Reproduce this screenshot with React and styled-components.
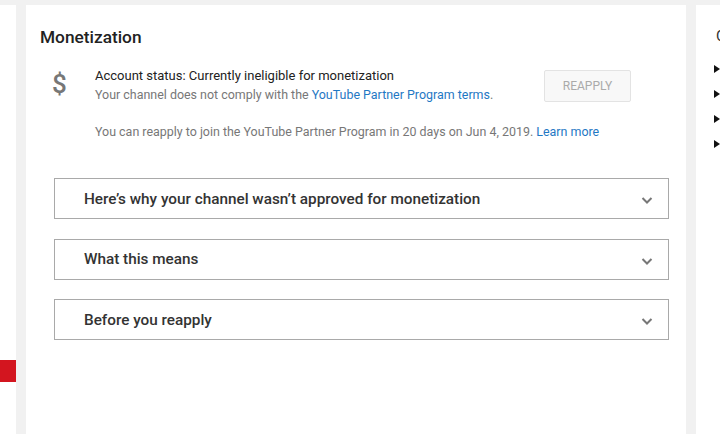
import React from 'react'
import styled, { createGlobalStyle } from 'styled-components'

const GlobalStyle = createGlobalStyle`
  html, body {
    margin: 0;
    padding: 0;
    background: #f1f1f1;
    font-family: Roboto, "Liberation Sans", Arial, sans-serif;
    overflow: hidden;
  }
`

const Page = styled.div`
  display: flex;
  gap: 10px;
  height: 434px;
  padding-top: 5px;
  box-sizing: border-box;
  width: 720px;
  overflow: hidden;
`

const SidePanel = styled.div`
  width: 16px;
  flex: none;
  background: #fff;
  display: flex;
  flex-direction: column;
  padding-top: 355px;
`

const RedBlock = styled.div`
  height: 22px;
  background: #d3151f;
`

const Card = styled.div`
  width: 660px;
  flex: none;
  background: #fff;
  padding: 22px 17px 0 14px;
  box-sizing: border-box;
`

const Title = styled.h2`
  margin: 0;
  font-size: 17.3px;
  font-weight: 500;
  color: #222;
  line-height: 20px;
`

const StatusRow = styled.div`
  display: flex;
  align-items: flex-start;
  margin-top: 19px;
  padding-left: 12px;
`

const Dollar = styled.div`
  width: 29px;
  font-size: 26px;
  color: #777;
  line-height: 1;
  padding-top: 5px;
  font-weight: 500;
`

const StatusText = styled.div`
  flex: 1;
  padding-left: 14px;
`

const Primary = styled.div`
  font-size: 13px;
  color: #222;
  line-height: 19px;
`

const Secondary = styled.div`
  font-size: 12.45px;
  color: #777;
  line-height: 19px;
`

const Link = styled.a`
  color: #1f78c4;
  text-decoration: none;
`

const ReapplyButton = styled.button`
  width: 87px;
  height: 32px;
  margin-top: 4px;
  margin-right: 38px;
  background: #f8f8f8;
  border: 1px solid #e3e3e3;
  border-radius: 2px;
  color: #aaa;
  font-family: inherit;
  font-size: 12px;
  text-transform: uppercase;
`

const Note = styled.div`
  font-size: 12.45px;
  color: #777;
  line-height: 19px;
  margin-top: 18px;
  padding-left: 55px;
`

const Accordions = styled.div`
  display: flex;
  flex-direction: column;
  gap: 19.5px;
  margin: 37px 0 0 14px;
`

const AccordionHeader = styled.div`
  height: 41px;
  border: 1px solid #a9a9a9;
  box-sizing: border-box;
  display: flex;
  align-items: center;
  justify-content: space-between;
  padding: 0 14px 0 29px;
  font-size: 15.3px;
  font-weight: 500;
  color: #333;

  svg {
    margin-top: 3px;
  }
`

const Chevron = () => (
  <svg width="14" height="14" viewBox="0 0 14 14">
    <path d="M2.5 5l4.5 4.5L11.5 5" fill="none" stroke="#777" strokeWidth="2" />
  </svg>
)

const RightPanel = styled.div`
  flex: 1;
  background: #fff;
  padding: 22px 0 0 20px;
  font-size: 15px;
  color: #333;
`

const Bullets = styled.div`
  display: flex;
  flex-direction: column;
  gap: 17px;
  margin-top: 20px;
`

const Bullet = styled.div`
  width: 0;
  height: 0;
  border-top: 4px solid transparent;
  border-bottom: 4px solid transparent;
  border-left: 6px solid #111;
  margin-left: -2px;
`

const sections = [
  "Here\u2019s why your channel wasn\u2019t approved for monetization",
  'What this means',
  'Before you reapply',
]

export default function App() {
  return (
    <>
      <GlobalStyle />
      <Page>
        <SidePanel>
          <RedBlock />
        </SidePanel>
        <Card>
          <Title>Monetization</Title>
          <StatusRow>
            <Dollar>$</Dollar>
            <StatusText>
              <Primary>Account status: Currently ineligible for monetization</Primary>
              <Secondary>
                Your channel does not comply with the <Link>YouTube Partner Program terms</Link>.
              </Secondary>
            </StatusText>
            <ReapplyButton>Reapply</ReapplyButton>
          </StatusRow>
          <Note>
            You can reapply to join the YouTube Partner Program in 20 days on Jun 4, 2019.{' '}
            <Link>Learn more</Link>
          </Note>
          <Accordions>
            {sections.map((s) => (
              <AccordionHeader key={s}>
                {s}
                <Chevron />
              </AccordionHeader>
            ))}
          </Accordions>
        </Card>
        <RightPanel>
          C
          <Bullets>
            <Bullet />
            <Bullet />
            <Bullet />
            <Bullet />
          </Bullets>
        </RightPanel>
      </Page>
    </>
  )
}
